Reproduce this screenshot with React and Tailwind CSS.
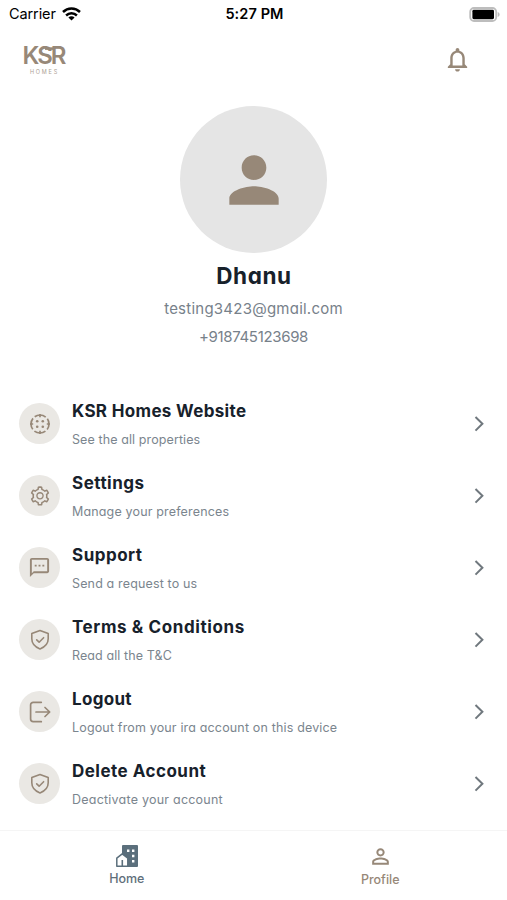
import { MdNotificationsNone, MdPerson, MdPersonOutline, MdOutlineTextsms } from "react-icons/md";
import { AiOutlineSetting } from "react-icons/ai";

function WifiIcon() {
  return (
    <svg width="19" height="14" viewBox="0 0 19 14" fill="none" stroke="#000" strokeWidth="2.5">
      <path d="M1 5a12.2 12.2 0 0 1 17 0" />
      <path d="M4.1 8.5a7.8 7.8 0 0 1 10.8 0" />
      <path d="M9.5 13.6 6.4 10.6a4.4 4.4 0 0 1 6.2 0z" fill="#000" stroke="none" />
    </svg>
  );
}

function BatteryIcon() {
  return (
    <svg width="31" height="15" viewBox="0 0 31 15">
      <rect x="1.2" y="1" width="26" height="13" rx="3.8" fill="#fff" stroke="#bdbdbd" strokeWidth="1.8" />
      <rect x="3.4" y="2.8" width="21.6" height="9.4" rx="1.4" fill="#000" />
      <path d="M28.7 5v5c1.2-.5 1.9-1.4 1.9-2.5s-.7-2-1.9-2.5z" fill="#bdbdbd" />
    </svg>
  );
}

function Logo() {
  return (
    <div className="flex w-[43px] flex-col items-center pt-[3px]">
      <div className="relative">
        <span className="block text-[24px] leading-5 font-semibold tracking-[-2px]">KSR</span>
        {/* bar that ties the S to the R */}
        <svg className="absolute top-0 left-0" width="43" height="20" viewBox="0 0 43 20" stroke="currentColor" strokeWidth="2.6">
          <path d="M22 2.6h9" />
        </svg>
      </div>
      <span className="mt-1 text-[5.5px] leading-[5px] tracking-[1.8px] pl-[2px] opacity-80">HOMES</span>
    </div>
  );
}

function TargetIcon() {
  return (
    <svg width="22" height="22" viewBox="0 0 22 22" fill="none" stroke="currentColor" strokeWidth="1.7">
      <circle cx="11" cy="11" r="9" strokeDasharray="11.8 2.337" strokeDashoffset="5.9" />
      <path d="M11 1v3.2M11 17.8V21M1 11h3.2M17.8 11H21" />
      <g fill="currentColor" stroke="none">
        <circle cx="8.2" cy="8.2" r="1.3" />
        <circle cx="13.8" cy="8.2" r="1.3" />
        <circle cx="8.2" cy="13.8" r="1.3" />
        <circle cx="13.8" cy="13.8" r="1.3" />
      </g>
    </svg>
  );
}

function ShieldIcon() {
  return (
    <svg width="22" height="22" viewBox="0 0 22 22" fill="none" stroke="currentColor" strokeWidth="1.6" strokeLinecap="round" strokeLinejoin="round">
      <path d="M11 1.5 19.2 4.5v5.3c0 4.8-3.1 8.2-8.2 10.1-5.1-1.9-8.2-5.3-8.2-10.1V4.5z" />
      <path d="m7.7 10.9 2.4 2.3 4.5-4.5" />
    </svg>
  );
}

function LogoutIcon() {
  return (
    <svg width="22" height="22" viewBox="0 0 22 22" fill="none" stroke="currentColor" strokeWidth="1.7" strokeLinecap="round" strokeLinejoin="round">
      <path d="M12.3 1.3H4.2a2.6 2.6 0 0 0-2.6 2.6v14.2a2.6 2.6 0 0 0 2.6 2.6h8.1" />
      <path d="M7 11h13.5M16 6.5l4.7 4.5-4.7 4.5" />
    </svg>
  );
}

function HomeIcon() {
  return (
    <svg width="24" height="24" viewBox="0 0 24 24">
      <path d="M7 2a1 1 0 0 1 1-1h14a1 1 0 0 1 1 1v20a1 1 0 0 1-1 1H7z" fill="#5b6f7c" />
      <path d="M1.8 14.2 7.2 9.8l5.6 4.4v8H1.8z" fill="#fff" stroke="#5b6f7c" strokeWidth="1.5" strokeLinejoin="round" />
      <path d="M7.3 16v6" stroke="#5b6f7c" strokeWidth="1.6" />
      <path d="M12 5.5h2.4v2.4H12zM17 5.5h2.4v2.4H17zM17 10.8h2.4v2.4H17zM17 16h2.4v2.4H17z" fill="#fff" />
    </svg>
  );
}

const items = [
  { title: "KSR Homes Website", text: "See the all properties", icon: <TargetIcon />, titleClass: "tracking-[0.34px]", textClass: "tracking-[0.1px]" },
  { title: "Settings", text: "Manage your preferences", icon: <AiOutlineSetting size={22} />, titleClass: "tracking-[0.5px]", textClass: "tracking-[0.16px]" },
  { title: "Support", text: "Send a request to us", icon: <MdOutlineTextsms size={23} />, titleClass: "tracking-[0.5px]", textClass: "tracking-[0.15px]" },
  { title: "Terms & Conditions", text: "Read all the T&C", icon: <ShieldIcon />, titleClass: "tracking-[0.6px]", textClass: "tracking-[0.1px]" },
  { title: "Logout", text: "Logout from your ira account on this device", icon: <LogoutIcon />, titleClass: "tracking-[0.3px]", textClass: "tracking-[0.16px]" },
  { title: "Delete Account", text: "Deactivate your account", icon: <ShieldIcon />, titleClass: "tracking-[0.48px]", textClass: "tracking-[0.23px]" },
];

function MenuRow({ item }) {
  return (
    <div className="flex h-[72px] items-center pl-[19px] pr-[21px]">
      <div className="mb-px flex size-[41px] shrink-0 items-center justify-center rounded-full bg-[#eae8e4] text-[#978878]">
        {item.icon}
      </div>
      <div className="ml-3 flex-1 whitespace-nowrap">
        <p className={`text-[17px] leading-6 font-bold text-[#17212b] ${item.titleClass}`}>{item.title}</p>
        <p className={`mt-[7px] text-[12.5px] leading-5 text-[#7b858e] ${item.textClass}`}>{item.text}</p>
      </div>
      <svg className="mb-px" width="14" height="18" viewBox="0 0 14 18" fill="none" stroke="#70787e" strokeWidth="2">
        <path d="m3.5 2 6.9 6.8-6.9 6.8" />
      </svg>
    </div>
  );
}

export default function App() {
  return (
    <div className="flex h-[900px] w-[507px] flex-col overflow-hidden bg-white font-['Inter',sans-serif]">
      <div className="grid h-7 grid-cols-3 items-center pl-[9px] pr-[7px] text-black">
        <div className="flex items-center gap-[6px]">
          <span className="text-[14.5px] tracking-[-0.1px]">Carrier</span>
          <WifiIcon />
        </div>
        <span className="text-center text-[14.5px] font-semibold tracking-[0.1px]">5:27 PM</span>
        <div className="flex justify-end">
          <BatteryIcon />
        </div>
      </div>

      <div className="flex h-[62px] items-center justify-between pl-[22px] pr-[35px] text-[#978878]">
        <Logo />
        <MdNotificationsNone size={29} />
      </div>

      <div className="flex flex-col items-center pt-4 [font-feature-settings:'cv11']">
        <div className="flex size-[147px] items-center justify-center rounded-full bg-[#e5e5e5] text-[#978878]">
          <MdPerson size={74} />
        </div>
        <h1 className="mt-[7px] pl-px text-[22.5px] leading-8 font-bold tracking-[0.6px] text-[#17212b]">Dhanu</h1>
        <p className="mt-[6px] text-[15px] leading-[22px] tracking-[0.24px] text-[#77818a]">testing3423@gmail.com</p>
        <p className="mt-[6px] text-[15px] leading-[22px] tracking-[-0.33px] text-[#77818a]">+918745123698</p>
      </div>

      <div className="mt-[40px] flex-1 [font-feature-settings:'cv11']">
        {items.map((item) => (
          <MenuRow key={item.title} item={item} />
        ))}
      </div>

      <nav className="grid h-[70px] grid-cols-2 border-t border-[#f5f5f5] pt-[13px] text-[12.5px] leading-4 font-medium">
        <div className="flex flex-col items-center text-[#5f6f7b]">
          <HomeIcon />
          <span className="mt-[3px] tracking-[-0.1px]">Home</span>
        </div>
        <div className="flex flex-col items-center text-[#978878]">
          <MdPersonOutline size={25} />
          <span className="mt-[3px]">Profile</span>
        </div>
      </nav>
    </div>
  );
}
